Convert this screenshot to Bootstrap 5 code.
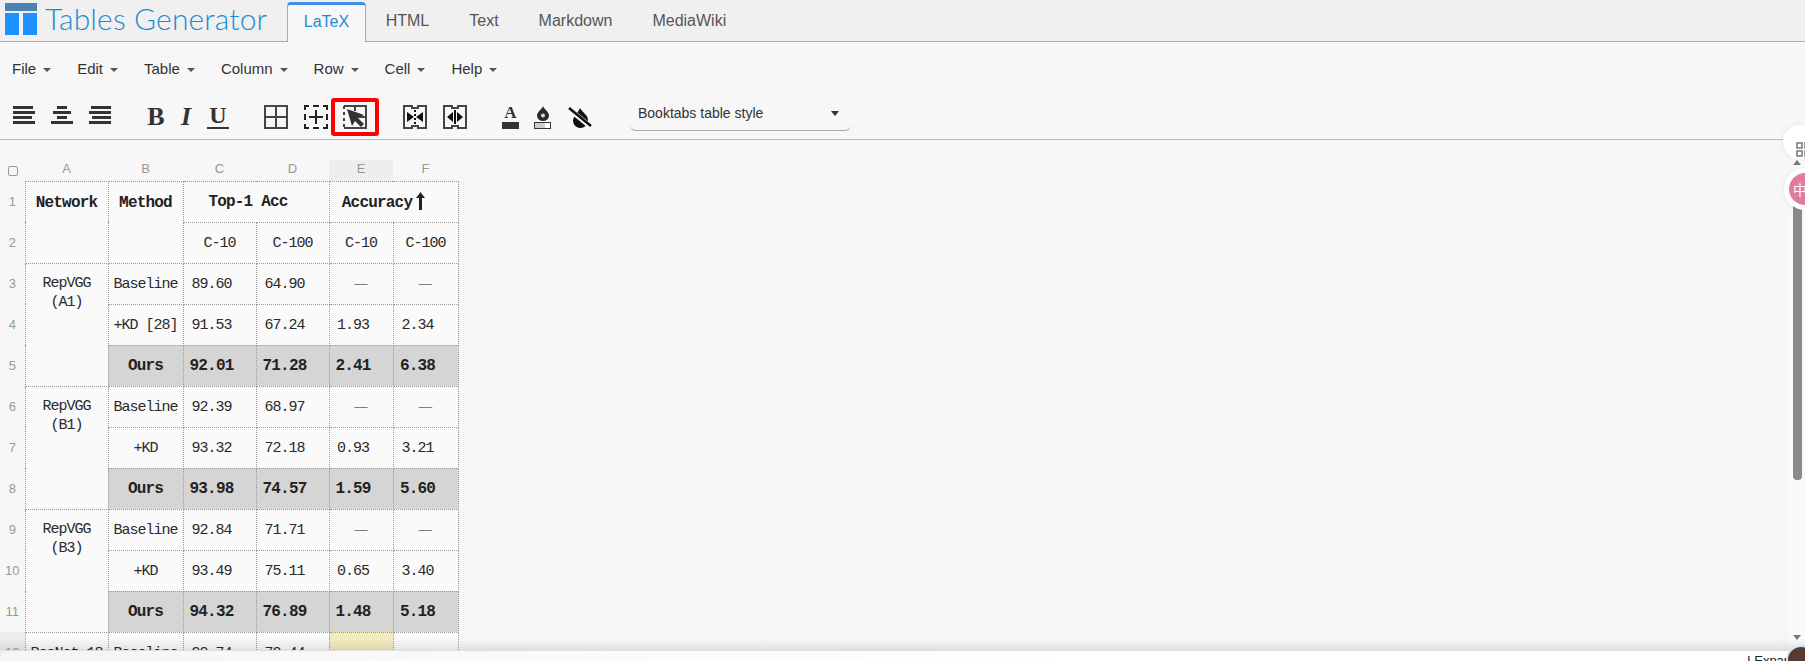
<!DOCTYPE html>
<html lang="en">
<head>
<meta charset="utf-8">
<title>Tables Generator</title>
<link href="https://cdn.jsdelivr.net/npm/bootstrap@5.3.0/dist/css/bootstrap.min.css" rel="stylesheet">
<style>
html,body{height:100%;overflow:hidden}
body{background:#f7f7f7;font-family:"Liberation Sans",Arial,sans-serif;color:#333;position:relative}
.topbar{height:42px;background:#f0f0f0;border-bottom:1px solid #aaa}
.brand-name{font-family:Lato,sans-serif;font-weight:300;font-size:30px;line-height:37px;color:#1a8cd2;margin-left:7px;letter-spacing:.15px}
.brand-logo{margin-left:5px;margin-top:3px}
.topbar .nav-tabs{border:0;margin-left:20px;height:42px;padding-top:2px;--bs-nav-tabs-border-width:0}
.topbar .nav-link{font-size:16px;color:#555;padding:0 20px;line-height:37px;height:40px;border:0;margin:0;border-radius:0;background:none}
.topbar .nav-link.active{color:#1a8cd2;background:#f7f7f7;border:1px solid #aaa;border-top:3px solid #3d8fe8;border-bottom:0;border-radius:4px 4px 0 0;padding:0 15.5px;line-height:34px;height:40px;margin-bottom:-1px}
.menurow{height:53px;padding-left:12px;padding-top:2px}
.menu-item{font-size:15px;color:#333;margin-right:26px}
.menu-item::after{content:"";display:inline-block;border-top:4px solid #555;border-left:4px solid transparent;border-right:4px solid transparent;margin-left:7px;vertical-align:2px}
.toolrow{height:45px;border-bottom:1px solid #bbb;padding-left:13px}
.toolrow svg{display:block;flex:none}
.toolrow svg.align-ico{margin-bottom:4px}
.glyph{font-family:"Liberation Serif",serif;font-size:26px;line-height:26px;color:#333;text-align:center;font-weight:700}
.glyph-b{width:20px;margin-left:35px}
.glyph-i{width:14px;margin-left:13px;font-style:italic}
.glyph-u{width:22px;margin-left:14px;font-weight:700;border-bottom:2px solid #333;line-height:21px;height:24px;font-size:24px}
.ml16{margin-left:16px}
.red-box{width:48px;height:38px;border:4px solid #f00;border-radius:3px;margin-left:3px;padding-left:8px;padding-top:3px}
.font-color{width:17px;margin-left:35px}
.font-letter{font-family:"Liberation Serif",serif;font-weight:700;font-size:17px;line-height:16px;text-align:center;color:#333}
.swatch{height:7px;margin-top:1px}
.swatch-dark{background:#333}
.swatch-fill{border:1px solid #333;background:linear-gradient(90deg,#ccc 70%,#fff 70%)}
.style-select{width:221px;height:27px;margin-left:38px;border-bottom:1px solid #aaa;border-radius:0 0 6px 6px;font-size:14px;color:#333;padding:0 12px 6px 8px}
.select-caret{border-top:5px solid #333;border-left:4px solid transparent;border-right:4px solid transparent}
.sheet-area{padding-top:20px}
table.sheet{table-layout:fixed;width:458px;margin:0;border-collapse:collapse;color:#222}
table.sheet th.hd,table.sheet th.rn{font-family:"Liberation Sans",sans-serif;font-weight:400;font-size:13px;color:#999;text-align:center;border:0;padding:0;background:transparent;vertical-align:middle}
table.sheet thead th.hd{height:21px;line-height:16px;padding-bottom:2px}
table.sheet th.sel{background:#eee}
table.sheet tbody tr{height:41px}
table.sheet td{font-family:"Liberation Mono",monospace;font-size:15px;letter-spacing:-1px;line-height:19px;border:1px dotted #999;background:#fafafa;padding:1px 0 0;text-align:center;vertical-align:middle;color:#2a2a2a;white-space:nowrap}
table.sheet td.num{padding-right:16px}
table.sheet td.dash{font-family:"Liberation Serif",serif;font-size:13.33px;letter-spacing:0;color:#111;padding-bottom:4px}
table.sheet td.b{font-weight:700;font-size:16px;letter-spacing:-.8px;color:#222}
table.sheet td.grey{background:#d5d5d5}
table.sheet td.net{vertical-align:top;padding-top:10px}
table.sheet td.yel{background:#f2ecc0}
table.sheet td.top2{vertical-align:top;padding-top:12px}
table.sheet td.pr16{padding-right:16px}
table.sheet td.pr20{padding-right:20px}
.up-arrow{display:inline-block;vertical-align:-3px;margin-left:4px}
.box-check{display:block;width:10px;height:10px;border:1px solid #999;border-radius:2px;margin:2px 0 0 8px}
.bottom-shade{position:absolute;left:0;right:0;bottom:11px;height:12px;background:linear-gradient(rgba(0,0,0,0),rgba(0,0,0,.09));pointer-events:none}
.bottom-bar{position:absolute;left:0;right:0;bottom:0;height:11px;border-radius:6px 0 0 0;border-top:1px solid #ddd;overflow:hidden;background:linear-gradient(90deg,#f5f5f5,#fff 60%)}
.expand-text{position:absolute;left:1747px;top:2px;font-size:13px;line-height:15px;color:#222;white-space:nowrap}
.scroll-track{position:absolute;right:0;top:140px;bottom:11px;width:15px;background:#fafafa}
.scroll-thumb{position:absolute;left:3px;top:33px;width:9px;height:307px;background:#8a8a8a;border-radius:0 0 4px 4px}
.arrow-up,.arrow-down{position:absolute;left:3px;border-left:4.5px solid transparent;border-right:4.5px solid transparent}
.arrow-up{top:20px;border-bottom:5px solid #777}
.arrow-down{top:495px;border-top:5px solid #777}
.float-qr{position:absolute;left:1783px;top:125px;width:34px;height:34px;border-radius:50%;background:#fff;box-shadow:0 0 6px rgba(0,0,0,.08);padding:12px 0 0 13px}
.float-pink{position:absolute;left:1784px;top:168px;width:42px;height:42px;border-radius:50%;background:#fff;box-shadow:0 0 6px rgba(0,0,0,.08);padding:5px}
.pink-dot{display:block;width:32px;height:32px;border-radius:50%;background:#e27c9c;color:#fff;font-family:"Noto Sans CJK SC",sans-serif;font-size:14px;line-height:32px;padding-left:4px}
.avatar{position:absolute;left:1786px;top:645px;width:30px;height:30px;border-radius:50%;background:#5a3a30;border:2px solid #cfe6f8}
</style>
</head>
<body>
<header class="topbar d-flex">
  <svg class="brand-logo" width="33" height="33" viewBox="0 0 33 33"><rect x="0" y="0" width="32" height="8" fill="#4a82b4"/><rect x="0" y="10" width="14" height="22" fill="#1e90ff"/><rect x="18" y="10" width="14" height="22" fill="#1e90ff"/></svg>
  <div class="brand-name">Tables Generator</div>
  <ul class="nav nav-tabs flex-nowrap">
    <li class="nav-item"><a class="nav-link active" href="#">LaTeX</a></li>
    <li class="nav-item"><a class="nav-link" href="#">HTML</a></li>
    <li class="nav-item"><a class="nav-link" href="#">Text</a></li>
    <li class="nav-item"><a class="nav-link" href="#">Markdown</a></li>
    <li class="nav-item"><a class="nav-link" href="#">MediaWiki</a></li>
  </ul>
</header>

<nav class="menurow d-flex align-items-center">
  <span class="menu-item">File</span><span class="menu-item">Edit</span><span class="menu-item">Table</span><span class="menu-item">Column</span><span class="menu-item">Row</span><span class="menu-item">Cell</span><span class="menu-item">Help</span>
</nav>

<div class="toolrow d-flex align-items-center">
  <svg class="align-ico" width="22" height="18" viewBox="0 0 22 18" fill="#333"><rect y="0" width="20" height="3"/><rect y="5" width="22" height="3"/><rect y="10" width="19" height="3"/><rect y="15" width="22" height="3"/></svg>
  <svg class="align-ico ml16" width="22" height="18" viewBox="0 0 22 18" fill="#333"><rect x="6" y="0" width="10" height="3"/><rect x="2" y="5" width="18" height="3"/><rect x="6" y="10" width="10" height="3"/><rect y="15" width="22" height="3"/></svg>
  <svg class="align-ico ml16" width="22" height="18" viewBox="0 0 22 18" fill="#333"><rect x="2" y="0" width="20" height="3"/><rect y="5" width="22" height="3"/><rect x="3" y="10" width="19" height="3"/><rect y="15" width="22" height="3"/></svg>
  <span class="glyph glyph-b">B</span><span class="glyph glyph-i">I</span><span class="glyph glyph-u">U</span>
  <svg style="margin-left:35px" width="24" height="24" viewBox="0 0 24 24" fill="none" stroke="#444" stroke-width="2"><path d="M1 1H23V23H1ZM12 1V23M1 12H23"/></svg>
  <svg style="margin-left:16px" width="24" height="24" viewBox="0 0 24 24" fill="none" stroke="#222" stroke-width="2"><path d="M1 5V1H5M9 1H15M19 1H23V5M23 9V15M23 19V23H19M15 23H9M5 23H1V19M1 15V9"/><path d="M12 5V9M12 15V19M5 12H9M15 12H19"/><path d="M9 12H15M12 9V15"/></svg>
  <div class="red-box">
    <svg width="24" height="24" viewBox="0 0 24 24"><path d="M1 1H23V23H1" fill="none" stroke="#444" stroke-width="2"/><path d="M1 1V23" stroke="#444" stroke-width="2" stroke-dasharray="3 3"/><path d="M12 1V6M16 12H23" stroke="#444" stroke-width="2"/><path d="M4 4L21 10L15 13L21 19L18 22L12 16L9 21Z" fill="#333"/></svg>
  </div>
  <svg style="margin-left:24px" width="24" height="24" viewBox="0 0 24 24"><path d="M1 1H9V3H15V1H23V23H15V21H9V23H1Z" fill="none" stroke="#444" stroke-width="2"/><path d="M4 7L11 12L4 17ZM20 7L13 12L20 17Z" fill="#111"/><path d="M12 5V20" stroke="#111" stroke-width="2" stroke-dasharray="2 2"/></svg>
  <svg style="margin-left:16px" width="24" height="24" viewBox="0 0 24 24"><path d="M1 1H9V3H15V1H23V23H15V21H9V23H1Z" fill="none" stroke="#444" stroke-width="2"/><path d="M10 7L4 12L10 17ZM14 7L20 12L14 17Z" fill="#111"/><path d="M12 5V19" stroke="#111" stroke-width="2"/></svg>
  <div class="font-color"><div class="font-letter">A</div><div class="swatch swatch-dark"></div></div>
  <div class="font-color" style="margin-left:15px">
    <svg class="mx-auto" width="12" height="16" viewBox="0 0 12 16"><path d="M6 1C7 4 12 7 12 10.500A6 5.500 0 0 1 0 10.500C0 7 5 4 6 1Z" fill="#2a2a2a"/><circle cx="6" cy="10.500" r="2" fill="#f2d9b0"/></svg>
    <div class="swatch swatch-fill"></div>
  </div>
  <svg style="margin-left:17px" width="24" height="21" viewBox="0 0 24 21"><path d="M12 1C14 5 20 8 20 13A7.500 7.500 0 0 1 5 14C5 9 10 6 12 1Z" fill="#111"/><path d="M1 2L23 20" stroke="#f7f7f7" stroke-width="5"/><path d="M1 1L23 19" stroke="#111" stroke-width="2.600"/></svg>
  <div class="style-select d-flex align-items-center justify-content-between"><span>Booktabs table style</span><span class="select-caret"></span></div>
</div>

<main class="sheet-area">
<table class="table sheet">
  <colgroup><col style="width:25px"><col style="width:83px"><col style="width:75px"><col style="width:73px"><col style="width:73px"><col style="width:64px"><col style="width:65px"></colgroup>
  <thead><tr><th class="hd"><span class="box-check"></span></th><th class="hd">A</th><th class="hd">B</th><th class="hd">C</th><th class="hd">D</th><th class="hd sel">E</th><th class="hd">F</th></tr></thead>
  <tbody>
  <tr><th class="rn">1</th><td class="b top2" rowspan="2">Network</td><td class="b top2" rowspan="2">Method</td><td class="b pr16" colspan="2">Top-1 Acc</td><td class="b pr20" colspan="2">Accuracy<svg class="up-arrow" width="9" height="18" viewBox="0 0 9 18"><path d="M4.500 0L9 6H6V18H3V6H0Z" fill="#222"/></svg></td></tr>
  <tr><th class="rn">2</th><td>C-10</td><td>C-100</td><td>C-10</td><td>C-100</td></tr>
  <tr><th class="rn">3</th><td class="net" rowspan="3">RepVGG<br>(A1)</td><td>Baseline</td><td class="num">89.60</td><td class="num">64.90</td><td class="dash">—</td><td class="dash">—</td></tr>
  <tr><th class="rn">4</th><td>+KD [28]</td><td class="num">91.53</td><td class="num">67.24</td><td class="num">1.93</td><td class="num">2.34</td></tr>
  <tr><th class="rn">5</th><td class="b grey">Ours</td><td class="b grey num">92.01</td><td class="b grey num">71.28</td><td class="b grey num">2.41</td><td class="b grey num">6.38</td></tr>
  <tr><th class="rn">6</th><td class="net" rowspan="3">RepVGG<br>(B1)</td><td>Baseline</td><td class="num">92.39</td><td class="num">68.97</td><td class="dash">—</td><td class="dash">—</td></tr>
  <tr><th class="rn">7</th><td>+KD</td><td class="num">93.32</td><td class="num">72.18</td><td class="num">0.93</td><td class="num">3.21</td></tr>
  <tr><th class="rn">8</th><td class="b grey">Ours</td><td class="b grey num">93.98</td><td class="b grey num">74.57</td><td class="b grey num">1.59</td><td class="b grey num">5.60</td></tr>
  <tr><th class="rn">9</th><td class="net" rowspan="3">RepVGG<br>(B3)</td><td>Baseline</td><td class="num">92.84</td><td class="num">71.71</td><td class="dash">—</td><td class="dash">—</td></tr>
  <tr><th class="rn">10</th><td>+KD</td><td class="num">93.49</td><td class="num">75.11</td><td class="num">0.65</td><td class="num">3.40</td></tr>
  <tr><th class="rn">11</th><td class="b grey">Ours</td><td class="b grey num">94.32</td><td class="b grey num">76.89</td><td class="b grey num">1.48</td><td class="b grey num">5.18</td></tr>
  <tr><th class="rn sel">12</th><td>ResNet-18</td><td>Baseline</td><td class="num">90.74</td><td class="num">70.44</td><td class="yel"></td><td></td></tr>
  </tbody>
</table>
</main>

<div class="scroll-track"><span class="arrow-up"></span><span class="scroll-thumb"></span><span class="arrow-down"></span></div>
<div class="float-qr"><svg width="16" height="16" viewBox="0 0 16 16" fill="none" stroke="#777" stroke-width="1.500"><rect x="1" y="1" width="5" height="5"/><rect x="1" y="9" width="5" height="5"/><rect x="9" y="1" width="5" height="5"/><rect x="9" y="9" width="5" height="5"/></svg></div>
<div class="float-pink"><span class="pink-dot">中</span></div>
<div class="bottom-shade"></div>
<div class="bottom-bar"><span class="expand-text">I Expan</span></div>
<div class="avatar"></div>
<script src="https://cdn.jsdelivr.net/npm/bootstrap@5.3.0/dist/js/bootstrap.bundle.min.js"></script>
</body>
</html>
